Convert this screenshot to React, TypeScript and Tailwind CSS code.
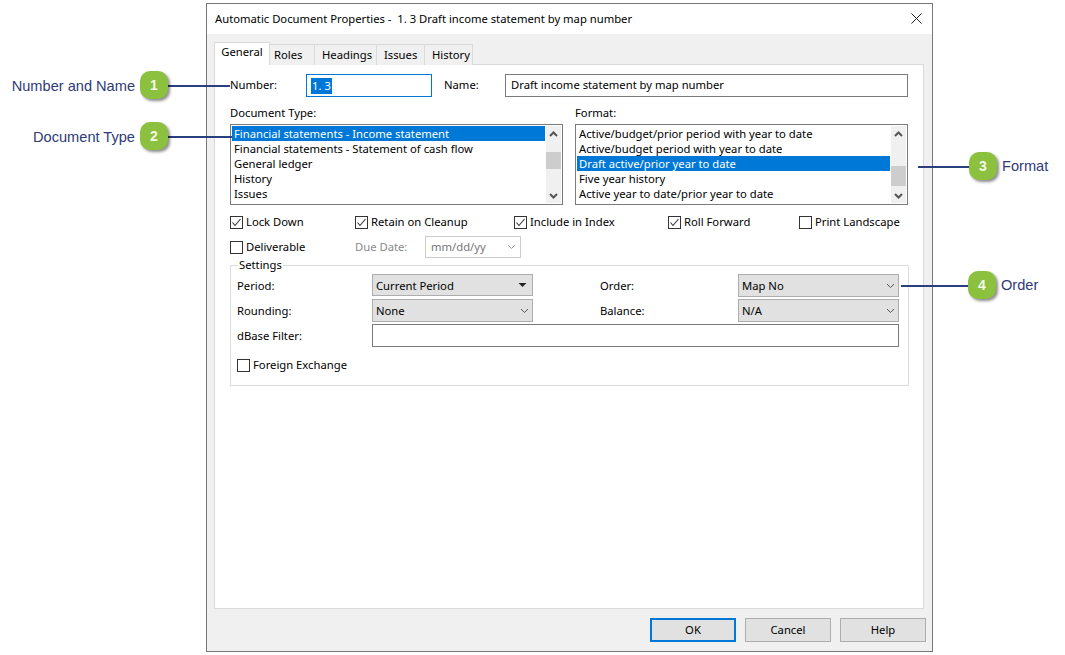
import type { ReactNode } from 'react';

const formatRows = [
    'Active/budget/prior period with year to date',
    'Active/budget period with year to date',
    'Draft active/prior year to date',
    'Five year history',
    'Active year to date/prior year to date',
];

const typeRows = [
    'Financial statements - Income statement',
    'Financial statements - Statement of cash flow',
    'General ledger',
    'History',
    'Issues',
];

function Chevron({ up = false, color = '#555555', width = 2 }: { up?: boolean; color?: string; width?: number }) {
    return (
        <svg width="9" height="6" viewBox="0 0 9 6" fill="none">
            <polyline
                points={up ? '1,5 4.5,1.5 8,5' : '1,1 4.5,4.5 8,1'}
                stroke={color}
                strokeWidth={width}
            />
        </svg>
    );
}

function ListBox({ rows, selected, thumbClass }: { rows: string[]; selected: number; thumbClass: string }) {
    return (
        <div className="flex h-[81px] w-[333px] border border-[#7a7a7a] bg-white p-px">
            <div className="flex-1 min-w-0">
                {rows.map((row, index) => (
                    <div
                        key={row}
                        className={
                            index === selected
                                ? 'h-[15px] bg-[#0078d7] pl-[2px] leading-[15px] text-white whitespace-nowrap'
                                : 'h-[15px] pl-[2px] leading-[15px] whitespace-nowrap'
                        }
                    >
                        {row}
                    </div>
                ))}
            </div>
            <div className="ml-px flex w-[15px] flex-col bg-[#f0f0f0]">
                <div className="flex h-[15px] items-center justify-center">
                    <Chevron up />
                </div>
                <div className="flex-1">
                    <div className={thumbClass} />
                </div>
                <div className="flex h-[15px] items-center justify-center">
                    <Chevron />
                </div>
            </div>
        </div>
    );
}

function Check({ label, checked = false, className = '' }: { label: string; checked?: boolean; className?: string }) {
    return (
        <div className={`flex h-4 items-center ${className}`}>
            <div className="flex h-[13px] w-[13px] items-center justify-center border border-[#333333] bg-white">
                {checked && (
                    <svg width="11" height="11" viewBox="0 0 11 11" fill="none">
                        <polyline points="1.5,5.5 4,8.5 9.5,2" stroke="#333333" strokeWidth="1.1" />
                    </svg>
                )}
            </div>
            <span className="ml-[3px] whitespace-nowrap">{label}</span>
        </div>
    );
}

function Select({ value, className = '', solid = false }: { value: string; className?: string; solid?: boolean }) {
    return (
        <div className={`flex items-center justify-between border border-[#adadad] bg-[#e1e1e1] pl-[3px] pr-[3px] ${className}`}>
            <span className="pt-[2px]">{value}</span>
            {solid ? (
                <svg width="9" height="6" viewBox="0 0 9 6" className="mr-[2px] mb-px">
                    <polygon points="0.5,1 8.5,1 4.5,5" fill="#222222" />
                </svg>
            ) : (
                <Chevron color="#555555" width={1} />
            )}
        </div>
    );
}

function FooterButton({ children, primary = false }: { children: ReactNode; primary?: boolean }) {
    return (
        <div
            className={
                primary
                    ? 'flex h-6 w-[86px] items-center justify-center border-2 border-[#0078d7] bg-[#e1e1e1]'
                    : 'flex h-6 w-[86px] items-center justify-center border border-[#adadad] bg-[#e1e1e1]'
            }
        >
            {children}
        </div>
    );
}

function Tab({ label, className = '' }: { label: string; className?: string }) {
    return (
        <div className={`mt-[2px] flex h-[21px] items-center border border-b-0 border-[#d9d9d9] bg-[#f0f0f0] -ml-px ${className}`}>
            {label}
        </div>
    );
}

function Badge({ n, className }: { n: number; className: string }) {
    return (
        <div
            className={`absolute flex h-[28px] w-[28px] items-center justify-center rounded-[10px] bg-[#8cc03f] font-['Liberation_Sans',Arial,sans-serif] text-[14px] font-bold text-[#f4f8ea] shadow-[2px_2px_3px_rgba(0,0,0,0.45)] ${className}`}
        >
            {n}
        </div>
    );
}

function Note({ children, className }: { children: ReactNode; className: string }) {
    return <div className={`absolute text-[14.6px] leading-[18px] text-[#2e3b78] whitespace-nowrap font-['Liberation_Sans',Arial,sans-serif] ${className}`}>{children}</div>;
}

export default function App() {
    return (
        <div className="relative h-[655px] w-[1065px] overflow-hidden bg-white font-['Noto_Sans',sans-serif] text-[11.25px] text-black">
            <div className="ml-[206px] pt-[3px]">
                <div className="flex h-[649px] w-[727px] flex-col border border-[#777777] bg-[#f0f0f0]">
                    <div className="flex h-[30px] items-center justify-between bg-white pl-2 pr-[8px]">
                        <span className="whitespace-pre">Automatic Document Properties -  1. 3 Draft income statement by map number</span>
                        <svg width="11" height="11" viewBox="0 0 11 11" className="mr-[2px] -mt-[2px]">
                            <path d="M0.5 0.5L10.5 10.5M10.5 0.5L0.5 10.5" stroke="#222222" strokeWidth="1" />
                        </svg>
                    </div>

                    <div className="flex flex-1 flex-col pl-[7px] pr-[6px] pt-2">
                        <div className="relative z-10 flex h-[23px] -mb-px">
                            <div className="flex h-[23px] w-[56px] items-center justify-center border border-b-0 border-[#d9d9d9] bg-white pb-[3px]">General</div>
                            <Tab label="Roles" className="w-[46px] pl-[4px]" />
                            <Tab label="Headings" className="w-[63px] pl-[7px]" />
                            <Tab label="Issues" className="w-[49px] pl-[7px]" />
                            <Tab label="History" className="w-[49px] pl-[7px]" />
                        </div>

                        <div className="h-[545px] w-[710px] border border-[#d9d9d9] bg-white pl-[15px] pt-[9px]">
                            <div className="flex h-[23px] items-center">
                                <span className="w-[76px]">Number:</span>
                                <div className="flex h-[23px] w-[126px] items-center border border-[#0078d7] px-[4px]">
                                    <span className="bg-[#0078d7] px-px leading-[16px] text-white">1. 3</span>
                                </div>
                                <span className="ml-3 w-[61px]">Name:</span>
                                <div className="flex h-[23px] w-[403px] items-center border border-[#7a7a7a] pl-[5px]">
                                    Draft income statement by map number
                                </div>
                            </div>

                            <div className="mt-2 grid w-[678px] grid-cols-[333px_333px] gap-x-3">
                                <div>
                                    <div className="mb-[3px] h-4 leading-4">Document Type:</div>
                                    <ListBox rows={typeRows} selected={0} thumbClass="mt-[11px] h-[17px] bg-[#cdcdcd]" />
                                </div>
                                <div>
                                    <div className="mb-[3px] h-4 leading-4">Format:</div>
                                    <ListBox rows={formatRows} selected={2} thumbClass="mt-[25px] h-[20px] bg-[#cdcdcd]" />
                                </div>
                            </div>

                            <div className="mt-[9px] flex">
                                <Check label="Lock Down" checked className="w-[125px]" />
                                <Check label="Retain on Cleanup" checked className="w-[159px]" />
                                <Check label="Include in Index" checked className="w-[154px]" />
                                <Check label="Roll Forward" checked className="w-[131px]" />
                                <Check label="Print Landscape" />
                            </div>

                            <div className="mt-[6px] flex h-[22px] items-center">
                                <Check label="Deliverable" className="w-[125px]" />
                                <span className="w-[70px] text-[#8a8a8a]">Due Date:</span>
                                <div className="flex h-[22px] w-[96px] items-center justify-between border border-[#cccccc] pl-[5px] pr-[4px] text-[#777777]">
                                    <span>mm/dd/yy</span>
                                    <Chevron color="#a0a0a0" width={1} />
                                </div>
                            </div>

                            <fieldset className="h-[128px] w-[679px] border border-[#dcdcdc] pl-[6px]">
                                <legend className="ml-[1px] px-px leading-[14px]">Settings</legend>
                                <div className="mt-[2px] flex h-[23px]">
                                    <span className="w-[135px] leading-[24px]">Period:</span>
                                    <Select value="Current Period" solid className="h-[22px] w-[161px]" />
                                    <span className="ml-[67px] w-[138px] leading-[24px]">Order:</span>
                                    <Select value="Map No" className="h-[23px] w-[161px]" />
                                </div>
                                <div className="mt-[2px] flex h-[23px] items-center">
                                    <span className="w-[135px] pt-[2px]">Rounding:</span>
                                    <Select value="None" className="h-[23px] w-[161px]" />
                                    <span className="ml-[67px] w-[138px] pt-[2px]">Balance:</span>
                                    <Select value="N/A" className="h-[23px] w-[161px]" />
                                </div>
                                <div className="mt-[2px] flex h-[23px] items-center">
                                    <span className="w-[135px] pt-[2px]">dBase Filter:</span>
                                    <div className="h-[23px] w-[527px] border border-[#7a7a7a]" />
                                </div>
                                <Check label="Foreign Exchange" className="mt-[10px]" />
                            </fieldset>
                        </div>

                        <div className="mt-[9px] flex justify-end gap-[9px]">
                            <FooterButton primary>OK</FooterButton>
                            <FooterButton>Cancel</FooterButton>
                            <FooterButton>Help</FooterButton>
                        </div>
                    </div>
                </div>
            </div>

            {/* callout lines sit over the dialog */}
            <div className="absolute left-[168px] top-[85px] h-[1.5px] w-[62px] bg-[#2a3f7e]" />
            <div className="absolute left-[168px] top-[136px] h-[1.5px] w-[64px] bg-[#2a3f7e]" />
            <div className="absolute left-[918px] top-[166px] h-[1.5px] w-[52px] bg-[#2a3f7e]" />
            <div className="absolute left-[901px] top-[285px] h-[1.5px] w-[68px] bg-[#2a3f7e]" />

            <Badge n={1} className="left-[140px] top-[71px]" />
            <Badge n={2} className="left-[140px] top-[122px]" />
            <Badge n={3} className="left-[969px] top-[152px]" />
            <Badge n={4} className="left-[968px] top-[271px]" />

            <Note className="right-[930px] top-[77px]">Number and Name</Note>
            <Note className="right-[930px] top-[128px]">Document Type</Note>
            <Note className="left-[1002px] top-[157px]">Format</Note>
            <Note className="left-[1001px] top-[276px]">Order</Note>
        </div>
    );
}
